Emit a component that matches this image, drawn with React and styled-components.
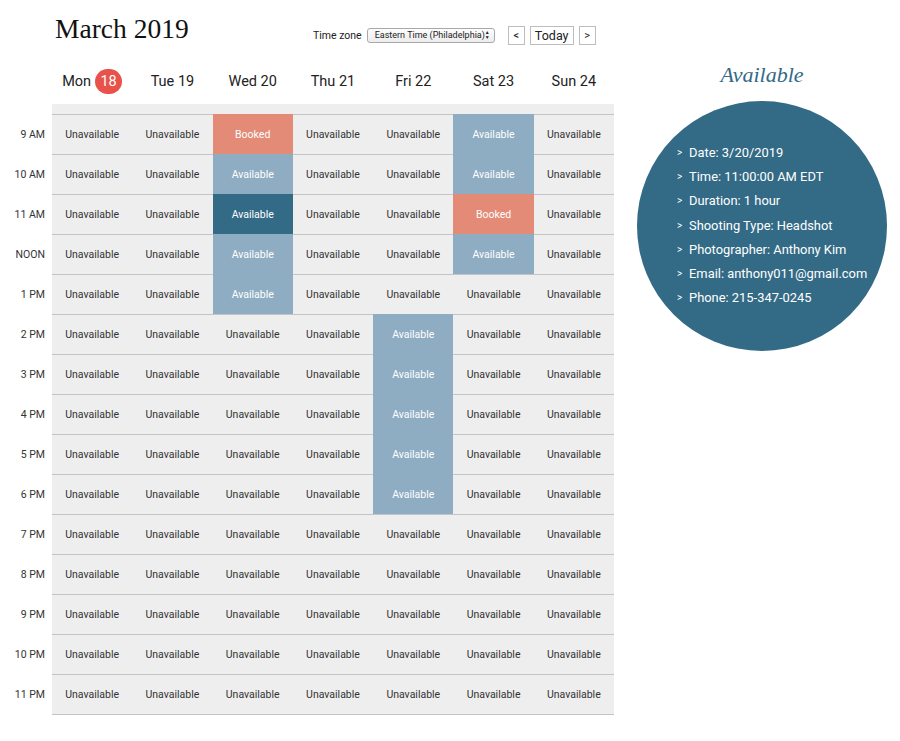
import React from "react";
import styled, { createGlobalStyle } from "styled-components";

const colors = {
  cell: "#eeeeee",
  line: "#c4c4c4",
  booked: "#e38b77",
  open: "#8fadc2",
  active: "#336a86",
  text: "#333333",
  today: "#e8524a"
};

const GlobalStyle = createGlobalStyle`
  html, body {
    margin: 0;
    background: #ffffff;
    font-family: Roboto, "Liberation Sans", sans-serif;
    color: ${colors.text};
  }
`;

const Page = styled.div`
  display: flex;
  align-items: flex-start;
  gap: 23px;
  width: 900px;
`;

const Calendar = styled.div`
  width: 614px;
`;

const TopBar = styled.div`
  display: flex;
  align-items: center;
  height: 58px;
  padding-left: 55px;
`;

const Title = styled.h1`
  margin: 0;
  font-family: "Liberation Serif", "DejaVu Serif", serif;
  font-weight: 400;
  font-size: 27.5px;
  color: #111;
  width: 258px;
`;

const Controls = styled.div`
  display: flex;
  align-items: center;
  margin-top: 12px;
  font-size: 10.5px;
  color: #222;
`;

const FakeSelect = styled.div`
  display: flex;
  align-items: center;
  justify-content: space-between;
  width: 128px;
  height: 15px;
  box-sizing: border-box;
  margin-left: 5px;
  padding: 0 4px 0 7px;
  border: 1px solid #a9a9a9;
  border-radius: 3px;
  background: linear-gradient(#fdfdfd, #ececec);
  font-size: 9px;
  color: #222;
  white-space: nowrap;
`;

const Arrows = styled.span`
  display: flex;
  flex-direction: column;
  font-size: 5px;
  line-height: 5px;
`;

const NavButton = styled.button`
  height: 19px;
  min-width: ${p => (p.wide ? "44px" : "17px")};
  margin-left: ${p => p.gap}px;
  padding: 0 4px;
  border: 1px solid #bdbdbd;
  background: #fff;
  font-family: Roboto, "Liberation Sans", sans-serif;
  font-size: ${p => (p.wide ? "12.5px" : "11px")};
  color: #222;
  cursor: pointer;
`;

const DayRow = styled.div`
  display: grid;
  grid-template-columns: 52px repeat(7, 1fr);
  align-items: center;
  height: 46px;
`;

const DayLabel = styled.div`
  display: flex;
  align-items: center;
  justify-content: center;
  gap: 4px;
  font-size: 14.5px;
  color: #222;
`;

const TodayBadge = styled.span`
  display: inline-flex;
  align-items: center;
  justify-content: center;
  width: 27px;
  height: 25px;
  border-radius: 13px;
  background: ${colors.today};
  color: #fff;
  font-size: 14.5px;
`;

const Body = styled.div`
  display: grid;
  grid-template-columns: 52px 1fr;
`;

const Hours = styled.div`
  padding-top: 10px;
`;

const HourLabel = styled.div`
  height: 40px;
  display: flex;
  align-items: center;
  justify-content: flex-end;
  padding-right: 7px;
  font-size: 10.5px;
  color: ${colors.text};
`;

const Grid = styled.div`
  background: ${colors.cell};
  padding-top: 10px;
  border-bottom: 1px solid ${colors.line};
`;

const Row = styled.div`
  display: grid;
  grid-template-columns: repeat(7, 1fr);
  height: 39px;
  border-top: 1px solid ${colors.line};
`;

const bgFor = { U: colors.cell, B: colors.booked, A: colors.open, S: colors.active };
const textFor = { U: "Unavailable", B: "Booked", A: "Available", S: "Available" };

const Cell = styled.div`
  display: flex;
  align-items: center;
  justify-content: center;
  font-size: 10.5px;
  background: ${p => bgFor[p.kind]};
  color: ${p => (p.kind === "U" ? colors.text : "#fff")};
  margin-top: ${p => (p.kind === "U" ? 0 : -1)}px;
`;

const Side = styled.div`
  width: 250px;
  display: flex;
  flex-direction: column;
  align-items: center;
`;

const SideTitle = styled.h2`
  margin: 62px 0 0;
  height: 39px;
  font-family: "Liberation Serif", "DejaVu Serif", serif;
  font-style: italic;
  font-weight: 400;
  font-size: 22px;
  color: ${colors.active};
`;

const Circle = styled.div`
  width: 250px;
  height: 250px;
  border-radius: 50%;
  background: ${colors.active};
  display: flex;
  align-items: center;
`;

const Details = styled.ul`
  list-style: none;
  margin: 0;
  padding: 0 0 2px 40px;
`;

const Detail = styled.li`
  display: flex;
  align-items: center;
  height: 24.2px;
  font-size: 12.9px;
  color: #fff;
  white-space: nowrap;

  &::before {
    content: ">";
    font-size: 10px;
    width: 12px;
  }
`;

const days = ["Mon 18", "Tue 19", "Wed 20", "Thu 21", "Fri 22", "Sat 23", "Sun 24"];
const hours = [
  "9 AM", "10 AM", "11 AM", "NOON", "1 PM", "2 PM", "3 PM", "4 PM",
  "5 PM", "6 PM", "7 PM", "8 PM", "9 PM", "10 PM", "11 PM"
];

const schedule = [
  "UUBUUAU",
  "UUAUUAU",
  "UUSUUBU",
  "UUAUUAU",
  "UUAUUUU",
  "UUUUAUU",
  "UUUUAUU",
  "UUUUAUU",
  "UUUUAUU",
  "UUUUAUU",
  "UUUUUUU",
  "UUUUUUU",
  "UUUUUUU",
  "UUUUUUU",
  "UUUUUUU"
];

const details = [
  "Date: 3/20/2019",
  "Time: 11:00:00 AM EDT",
  "Duration: 1 hour",
  "Shooting Type: Headshot",
  "Photographer: Anthony Kim",
  "Email: anthony011@gmail.com",
  "Phone: 215-347-0245"
];

export default function App() {
  return (
    <>
      <GlobalStyle />
      <Page>
        <Calendar>
          <TopBar>
            <Title>March 2019</Title>
            <Controls>
              <span>Time zone</span>
              <FakeSelect>
                <span>Eastern Time (Philadelphia)</span>
                <Arrows>
                  <span>▲</span>
                  <span>▼</span>
                </Arrows>
              </FakeSelect>
              <NavButton gap={13}>&lt;</NavButton>
              <NavButton gap={5} wide>Today</NavButton>
              <NavButton gap={5}>&gt;</NavButton>
            </Controls>
          </TopBar>
          <DayRow>
            <span />
            {days.map((d, i) =>
              i === 0 ? (
                <DayLabel key={d}>
                  Mon <TodayBadge>18</TodayBadge>
                </DayLabel>
              ) : (
                <DayLabel key={d}>{d}</DayLabel>
              )
            )}
          </DayRow>
          <Body>
            <Hours>
              {hours.map(h => (
                <HourLabel key={h}>{h}</HourLabel>
              ))}
            </Hours>
            <Grid>
              {schedule.map((row, r) => (
                <Row key={r}>
                  {row.split("").map((k, c) => (
                    <Cell key={c} kind={k}>
                      {textFor[k]}
                    </Cell>
                  ))}
                </Row>
              ))}
            </Grid>
          </Body>
        </Calendar>
        <Side>
          <SideTitle>Available</SideTitle>
          <Circle>
            <Details>
              {details.map(d => (
                <Detail key={d}>{d}</Detail>
              ))}
            </Details>
          </Circle>
        </Side>
      </Page>
    </>
  );
}
